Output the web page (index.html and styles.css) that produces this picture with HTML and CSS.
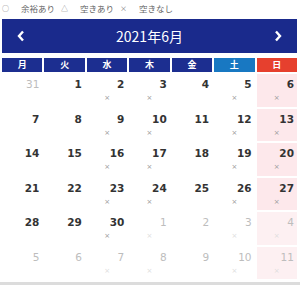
FILE: index.html
```html
<!DOCTYPE html>
<html lang="ja">
<head>
<meta charset="utf-8">
<link rel="stylesheet" href="styles.css">
</head>
<body>
<div class="legend">
  <span class="lg"><span class="sym">○</span>余裕あり</span>
  <span class="lg"><span class="sym">△</span>空きあり</span>
  <span class="lg"><span class="sym">×</span>空きなし</span>
</div>
<div class="cal">
  <div class="head">
    <svg class="nav" width="8" height="12" viewBox="0 0 8 12"><polyline points="6,1.5 2,6 6,10.5" fill="none" stroke="#fff" stroke-width="2.4"/></svg>
    <div class="title">2021年6月</div>
    <svg class="nav" width="8" height="12" viewBox="0 0 8 12"><polyline points="2,1.5 6,6 2,10.5" fill="none" stroke="#fff" stroke-width="2.4"/></svg>
  </div>
  <div class="grid">
    <div class="wd">月</div><div class="wd">火</div><div class="wd">水</div><div class="wd">木</div><div class="wd">金</div><div class="wd sat">土</div><div class="wd sun">日</div>

    <div class="d off"><span class="n">31</span></div>
    <div class="d"><span class="n">1</span></div>
    <div class="d"><span class="n">2</span><span class="x">×</span></div>
    <div class="d"><span class="n">3</span><span class="x">×</span></div>
    <div class="d"><span class="n">4</span></div>
    <div class="d"><span class="n">5</span><span class="x">×</span></div>
    <div class="d su"><span class="n">6</span><span class="x">×</span></div>

    <div class="d"><span class="n">7</span></div>
    <div class="d"><span class="n">8</span></div>
    <div class="d"><span class="n">9</span><span class="x">×</span></div>
    <div class="d"><span class="n">10</span><span class="x">×</span></div>
    <div class="d"><span class="n">11</span></div>
    <div class="d"><span class="n">12</span><span class="x">×</span></div>
    <div class="d su"><span class="n">13</span><span class="x">×</span></div>

    <div class="d"><span class="n">14</span></div>
    <div class="d"><span class="n">15</span></div>
    <div class="d"><span class="n">16</span><span class="x">×</span></div>
    <div class="d"><span class="n">17</span><span class="x">×</span></div>
    <div class="d"><span class="n">18</span></div>
    <div class="d"><span class="n">19</span><span class="x">×</span></div>
    <div class="d su"><span class="n">20</span><span class="x">×</span></div>

    <div class="d"><span class="n">21</span></div>
    <div class="d"><span class="n">22</span></div>
    <div class="d"><span class="n">23</span><span class="x">×</span></div>
    <div class="d"><span class="n">24</span><span class="x">×</span></div>
    <div class="d"><span class="n">25</span></div>
    <div class="d"><span class="n">26</span><span class="x">×</span></div>
    <div class="d su"><span class="n">27</span><span class="x">×</span></div>

    <div class="d"><span class="n">28</span></div>
    <div class="d"><span class="n">29</span></div>
    <div class="d"><span class="n">30</span><span class="x">×</span></div>
    <div class="d off"><span class="n">1</span><span class="x">×</span></div>
    <div class="d off"><span class="n">2</span></div>
    <div class="d off"><span class="n">3</span><span class="x">×</span></div>
    <div class="d off su"><span class="n">4</span><span class="x">×</span></div>

    <div class="d off"><span class="n">5</span></div>
    <div class="d off"><span class="n">6</span></div>
    <div class="d off"><span class="n">7</span><span class="x">×</span></div>
    <div class="d off"><span class="n">8</span><span class="x">×</span></div>
    <div class="d off"><span class="n">9</span></div>
    <div class="d off"><span class="n">10</span><span class="x">×</span></div>
    <div class="d off su"><span class="n">11</span><span class="x">×</span></div>
  </div>
</div>
</body>
</html>
```

FILE: styles.css
```css
html, body {
  margin: 0;
  padding: 0;
  background: #fff;
}
body {
  width: 300px;
  font-family: "Noto Sans CJK JP", "Noto Sans", sans-serif;
  color: #333;
}
.legend {
  display: flex;
  align-items: center;
  gap: 6px;
  height: 15px;
  padding-top: 0;
  margin-bottom: 2px;
  padding-left: 2px;
  font-size: 8.5px;
  color: #666;
  line-height: 14px;
}
.lg {
  display: flex;
  align-items: center;
}
.sym {
  display: inline-block;
  width: 7px;
  margin-right: 12px;
  font-size: 7px;
  color: #777;
  text-align: center;
}
.cal {
  padding: 2px 3px 0 2px;
  border-bottom: 3px solid #dcdcdc;
  padding-bottom: 3px;
}
.head {
  height: 34px;
  background: #1a2a8c;
  display: flex;
  align-items: center;
  justify-content: space-between;
  padding: 0 15px 0 15px;
  color: #fff;
}
.title {
  font-size: 14px;
  line-height: 18px;
}
.grid {
  margin-top: 5px;
  display: grid;
  grid-template-columns: repeat(7, 1fr);
  grid-auto-rows: 32.5px;
  grid-template-rows: 14px;
  gap: 2px;
}
.wd {
  background: #1c2e90;
  color: #fff;
  font-size: 9px;
  font-weight: bold;
  line-height: 14px;
  text-align: center;
}
.wd.sat { background: #1878c2; }
.wd.sun { background: #e6402e; }
.d {
  display: flex;
  flex-direction: column;
  padding: 3px 3px 0 3px;
}
.d.su { background: #fde8eb; }
.d.off.su { background: #fdf0f2; }
.n {
  align-self: flex-end;
  font-family: "DejaVu Sans", sans-serif;
  font-size: 10.5px;
  font-weight: bold;
  line-height: 14px;
  color: #333;
}
.x {
  align-self: center;
  font-family: "DejaVu Sans", sans-serif;
  font-size: 7px;
  line-height: 10px;
  margin-top: 2px;
  color: #999;
}
.off .n {
  font-weight: normal;
  color: #bdbdbd;
}
.off .x {
  color: #ddd;
}
```
